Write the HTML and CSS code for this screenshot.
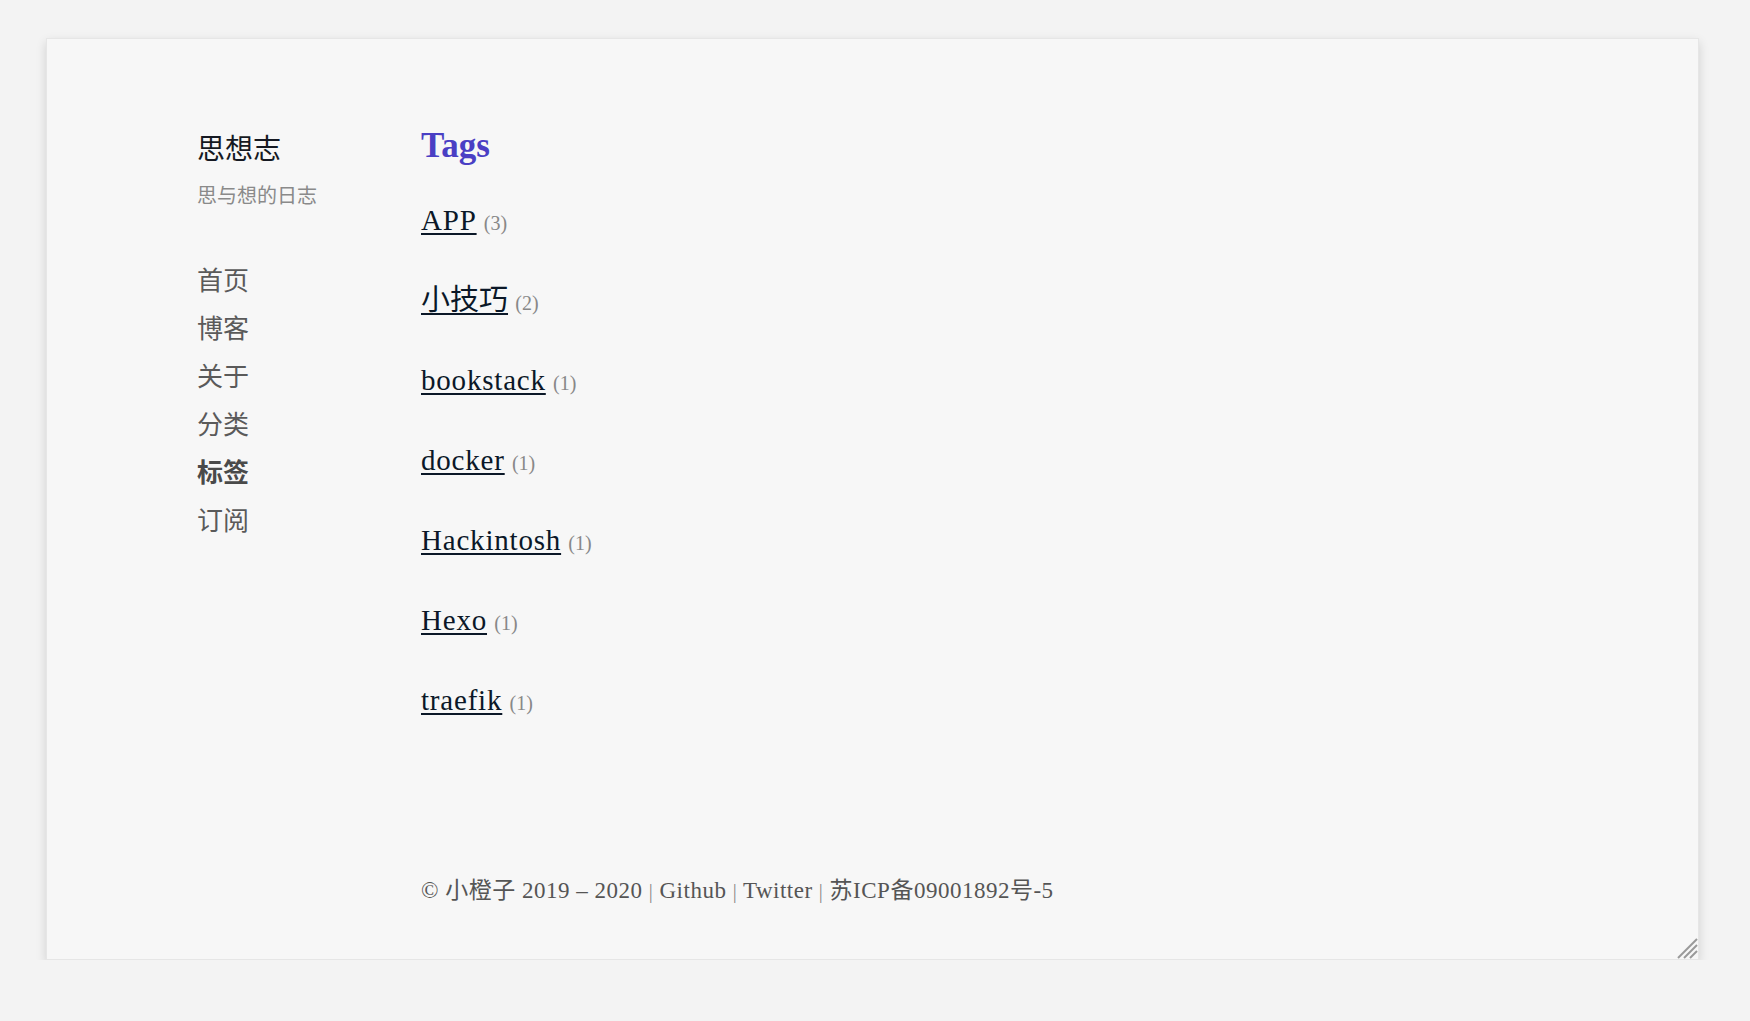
FILE: index.html
```html
<!DOCTYPE html>
<html lang="zh-CN">
<head>
    <meta charset="UTF-8">
    <meta name="viewport" content="width=device-width, initial-scale=1.0">
    <title>Tags | 思想志</title>
    <link rel="stylesheet" href="styles.css">
</head>
<body>
    <div class="frame">
        <div class="layout">
            <aside class="sidebar">
                <div class="site-title">思想志</div>
                <div class="site-subtitle">思与想的日志</div>
                <nav class="menu">
                    <a href="#">首页</a>
                    <a href="#">博客</a>
                    <a href="#">关于</a>
                    <a href="#">分类</a>
                    <a href="#" class="current">标签</a>
                    <a href="#">订阅</a>
                </nav>
            </aside>

            <main class="content">
                <h1 class="page-title">Tags</h1>
                <ul class="tag-list">
                    <li><a href="#">APP</a> <span class="count">(3)</span></li>
                    <li><a href="#" class="cjk">小技巧</a> <span class="count">(2)</span></li>
                    <li><a href="#">bookstack</a> <span class="count">(1)</span></li>
                    <li><a href="#">docker</a> <span class="count">(1)</span></li>
                    <li><a href="#">Hackintosh</a> <span class="count">(1)</span></li>
                    <li><a href="#">Hexo</a> <span class="count">(1)</span></li>
                    <li><a href="#">traefik</a> <span class="count">(1)</span></li>
                </ul>

                <footer class="footer">
                    © 小橙子 2019 – 2020 <span class="sep">|</span> <a href="#">Github</a> <span class="sep">|</span> <a href="#">Twitter</a> <span class="sep">|</span> <a href="#">苏ICP备09001892号-5</a>
                </footer>
            </main>
        </div>

        <svg class="grip" width="22" height="22" viewBox="0 0 22 22">
            <line x1="21" y1="2" x2="2" y2="21" stroke="#999" stroke-width="2"/>
            <line x1="21" y1="8" x2="8" y2="21" stroke="#999" stroke-width="2"/>
            <line x1="21" y1="14" x2="14" y2="21" stroke="#999" stroke-width="2"/>
        </svg>
    </div>
</body>
</html>
```

FILE: styles.css
```css
html, body {
    margin: 0;
    padding: 0;
    background-color: #f3f3f3;
}
body {
    padding: 38px 51px 0 46px;
    font-family: "Liberation Serif", "Noto Sans CJK SC", serif;
}
.frame {
    position: relative;
    box-sizing: border-box;
    height: 922px;
    background-color: #f7f7f7;
    border: 1px solid #e6e6e6;
    box-shadow: 0 4px 10px rgba(0, 0, 0, 0.14);
}
.layout {
    display: flex;
    padding: 85px 0 0 150px;
}
.sidebar {
    width: 224px;
    flex-shrink: 0;
    font-family: "Noto Sans CJK SC", sans-serif;
}
.site-title {
    margin-top: 5px;
    font-size: 28px;
    line-height: 36px;
    color: #151922;
}
.site-subtitle {
    margin-top: 16px;
    font-size: 20px;
    line-height: 28px;
    color: #8a8a8a;
}
.menu {
    display: flex;
    flex-direction: column;
    margin-top: 46px;
}
.menu a {
    font-size: 26px;
    line-height: 48px;
    color: #5a5a5a;
    text-decoration: none;
}
.menu a.current {
    font-weight: bold;
    color: #4a4a4a;
}
.content {
    flex: 1;
}
.page-title {
    margin: 0;
    font-size: 35px;
    line-height: 44px;
    font-weight: bold;
    color: #4a3fc4;
}
.tag-list {
    list-style: none;
    margin: 32px 0 0 0;
    padding: 0;
}
.tag-list li {
    height: 40px;
    font-size: 29px;
    line-height: 40px;
    margin-bottom: 40px;
}
.tag-list a {
    color: #0b1828;
    letter-spacing: 0.8px;
    text-decoration: underline;
    text-decoration-thickness: 2px;
    text-underline-offset: 3px;
}
.tag-list a.cjk {
    letter-spacing: 0;
}
.count {
    font-size: 20px;
    color: #888;
}
.footer {
    margin-top: 156px;
    font-size: 23px;
    line-height: 30px;
    letter-spacing: 0.5px;
    color: #555;
}
.footer a {
    color: #555;
    text-decoration: none;
}
.footer .sep {
    color: #888;
    font-size: 20px;
}
.grip {
    position: absolute;
    right: 0;
    bottom: 0;
}
```
